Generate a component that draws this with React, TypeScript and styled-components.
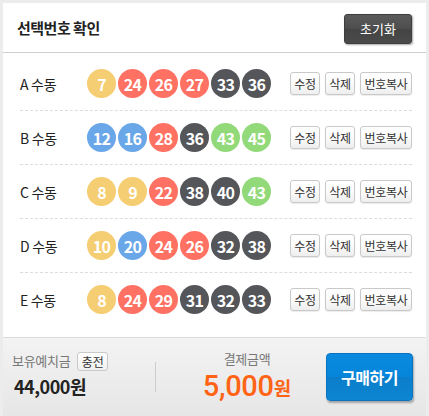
import React from "react";
import styled, { createGlobalStyle } from "styled-components";

const Global = createGlobalStyle`
  html, body { margin: 0; padding: 0; }
  body {
    background: #ececec;
    font-family: "Noto Sans CJK KR", "Noto Sans", "Liberation Sans", sans-serif;
    width: 429px;
    height: 416px;
    overflow: hidden;
  }
`;

const Frame = styled.div`
  box-sizing: border-box;
  width: 429px;
  height: 416px;
  padding: 3px 3px 0 3px;
  display: flex;
`;

const Panel = styled.div`
  flex: 1;
  background: #fff;
  display: flex;
  flex-direction: column;
`;

const Header = styled.div`
  height: 50px;
  box-sizing: border-box;
  border-bottom: 1px solid #cfcfcf;
  display: flex;
  align-items: center;
  justify-content: space-between;
  padding: 0 14px 0 14px;
`;

const Title = styled.h1`
  margin: 0;
  font-size: 15px;
  font-weight: 700;
  color: #222;
  letter-spacing: -0.5px;
`;

const ResetButton = styled.button`
  width: 68px;
  height: 30px;
  border: 1px solid #3e3e3e;
  border-radius: 3px;
  background: linear-gradient(#5a5a5a 0%, #4e4e4e 50%, #444 51%, #4a4a4a 100%);
  color: #fff;
  font-family: inherit;
  font-size: 13px;
  box-shadow: 1px 1px 2px rgba(0, 0, 0, 0.35);
  padding: 0;
  margin-top: 2px;
`;

const List = styled.div`
  padding: 4px 14px 0 17px;
  flex: 1;
`;

const Row = styled.div<{ $last?: boolean }>`
  height: 53px;
  display: flex;
  align-items: center;
  border-bottom: ${(p) => (p.$last ? "none" : "1px dashed #dcdcdc")};
`;

const Label = styled.div`
  width: 67px;
  font-size: 14px;
  color: #222;
  letter-spacing: -0.3px;
`;

const Balls = styled.div`
  display: flex;
  gap: 2px;
  width: 184px;
`;

const Ball = styled.span<{ $color: string }>`
  width: 29px;
  height: 29px;
  border-radius: 50%;
  background: ${(p) => p.$color};
  color: #fff;
  font-family: "Noto Sans CJK KR", "Noto Sans", sans-serif;
  font-weight: 700;
  font-size: 16px;
  letter-spacing: -0.8px;
  display: flex;
  align-items: center;
  justify-content: center;
`;

const Actions = styled.div`
  margin-left: auto;
  display: flex;
  gap: 5px;
`;

const SmallButton = styled.button<{ $w: number }>`
  width: ${(p) => p.$w}px;
  height: 23px;
  padding: 0;
  border: 1px solid #c9c9c9;
  border-radius: 3px;
  background: linear-gradient(#ffffff 0%, #fbfbfb 50%, #eeeeee 100%);
  color: #333;
  font-family: inherit;
  font-size: 12px;
  letter-spacing: -0.3px;
  box-shadow: 0 1px 1px rgba(0, 0, 0, 0.08);
`;

const Bottom = styled.div`
  height: 79px;
  box-sizing: border-box;
  border-top: 1px solid #dcdcdc;
  background: linear-gradient(#f3f3f3, #e6e6e6);
  display: flex;
  align-items: center;
  padding: 0 13px 4px 9px;
`;

const Wallet = styled.div`
  width: 143px;
  display: flex;
  flex-direction: column;
  gap: 2px;
`;

const WalletTop = styled.div`
  display: flex;
  align-items: center;
  gap: 7px;
  height: 20px;
`;

const Caption = styled.span`
  font-size: 13px;
  line-height: 18px;
  color: #777;
  letter-spacing: -0.3px;
`;

const ChargeButton = styled.button`
  width: 31px;
  height: 19px;
  padding: 0;
  border: 1px solid #c9c9c9;
  border-radius: 3px;
  background: linear-gradient(#fff, #f0f0f0);
  font-family: inherit;
  font-size: 12px;
  color: #333;
`;

const Balance = styled.div`
  font-size: 18px;
  line-height: 26px;
  font-weight: 700;
  color: #222;
  letter-spacing: -0.5px;
  padding-left: 2px;
`;

const Divider = styled.div`
  width: 1px;
  height: 30px;
  background: #cdcdcd;
  margin-top: 4px;
`;

const Pay = styled.div`
  flex: 1;
  padding-left: 12px;
  display: flex;
  flex-direction: column;
  align-items: center;
  gap: 4px;
  margin-top: -1px;
`;

const Amount = styled.div`
  color: #ff6416;
  line-height: 28px;
  height: 28px;
  display: flex;
  align-items: baseline;
`;

const AmountNum = styled.span`
  font-family: Roboto, "Liberation Sans", sans-serif;
  font-size: 29px;
  font-weight: 500;
  letter-spacing: -0.3px;
`;

const AmountUnit = styled.span`
  font-size: 19px;
  font-weight: 700;
  line-height: 20px;
`;

const BuyButton = styled.button`
  width: 87px;
  height: 48px;
  padding: 0;
  border: 1px solid #0b74c2;
  border-radius: 4px;
  background: linear-gradient(#0a8ade 0%, #0586da 50%, #0b7ecb 51%, #0d86d2 100%);
  color: #fff;
  font-family: inherit;
  font-size: 16px;
  font-weight: 700;
  letter-spacing: -0.5px;
  box-shadow: 1px 2px 2px rgba(0, 0, 0, 0.3);
  margin-top: 3px;
`;

const YELLOW = "#f5cd72";
const RED = "#ff7163";
const DARK = "#54565a";
const BLUE = "#69a7e9";
const GREEN = "#92d97a";

const colorFor = (n: number) => {
  if (n <= 10) return YELLOW;
  if (n <= 20) return BLUE;
  if (n <= 30) return RED;
  if (n <= 40) return DARK;
  return GREEN;
};

const rows: { label: string; nums: number[] }[] = [
  { label: "A 수동", nums: [7, 24, 26, 27, 33, 36] },
  { label: "B 수동", nums: [12, 16, 28, 36, 43, 45] },
  { label: "C 수동", nums: [8, 9, 22, 38, 40, 43] },
  { label: "D 수동", nums: [10, 20, 24, 26, 32, 38] },
  { label: "E 수동", nums: [8, 24, 29, 31, 32, 33] },
];

export default function App() {
  return (
    <>
      <Global />
      <Frame>
        <Panel>
          <Header>
            <Title>선택번호 확인</Title>
            <ResetButton>초기화</ResetButton>
          </Header>
          <List>
            {rows.map((r, i) => (
              <Row key={r.label} $last={i === rows.length - 1}>
                <Label>{r.label}</Label>
                <Balls>
                  {r.nums.map((n) => (
                    <Ball key={n} $color={colorFor(n)}>
                      {n}
                    </Ball>
                  ))}
                </Balls>
                <Actions>
                  <SmallButton $w={30}>수정</SmallButton>
                  <SmallButton $w={30}>삭제</SmallButton>
                  <SmallButton $w={52}>번호복사</SmallButton>
                </Actions>
              </Row>
            ))}
          </List>
          <Bottom>
            <Wallet>
              <WalletTop>
                <Caption>보유예치금</Caption>
                <ChargeButton>충전</ChargeButton>
              </WalletTop>
              <Balance>44,000원</Balance>
            </Wallet>
            <Divider />
            <Pay>
              <Caption>결제금액</Caption>
              <Amount>
                <AmountNum>5,000</AmountNum>
                <AmountUnit>원</AmountUnit>
              </Amount>
            </Pay>
            <BuyButton>구매하기</BuyButton>
          </Bottom>
        </Panel>
      </Frame>
    </>
  );
}
